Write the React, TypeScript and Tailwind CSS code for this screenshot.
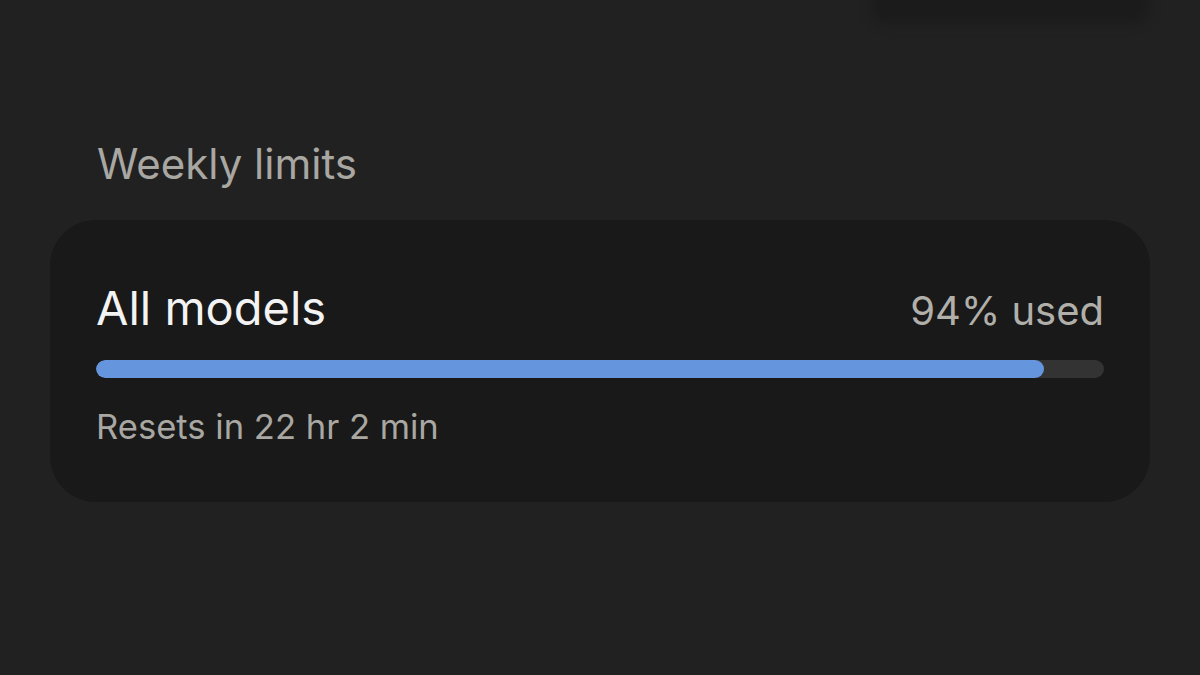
import React from "react";

export default function App() {
  const pct = 94;
  return (
    <div
      className="w-[1200px] h-[675px] bg-[#212121] overflow-hidden"
      style={{ fontFamily: "Inter, 'Noto Sans', sans-serif" }}
    >
      <div className="h-[139px] flex justify-end items-start pr-[50px]">
        <div className="mt-[-12px] w-[280px] h-[36px] rounded-[20px] bg-[#1a1a1a] blur-[6px] opacity-80" />
      </div>
      <div className="px-[97px] text-[42px] leading-[50px] text-[#a9a7a2]">
        Weekly limits
      </div>
      <div className="mt-[31px] mx-[50px] h-[282px] rounded-[46px] bg-[#191919] px-[46px] pt-[60px]">
        <div className="flex items-baseline justify-between">
          <span className="text-[47px] leading-[56px] text-[#f3f3f3]">All models</span>
          <span className="text-[40px] leading-[56px] text-[#b1afaa]">{pct}% used</span>
        </div>
        <div className="mt-[21px] h-[18px] rounded-full bg-[#333333] overflow-hidden">
          <div className="h-full rounded-full bg-[#6595dc]" style={{ width: `${pct}%` }} />
        </div>
        <div className="mt-[27px] text-[34.6px] leading-[42px] text-[#a9a7a2]">
          Resets in 22 hr 2 min
        </div>
      </div>
    </div>
  );
}
